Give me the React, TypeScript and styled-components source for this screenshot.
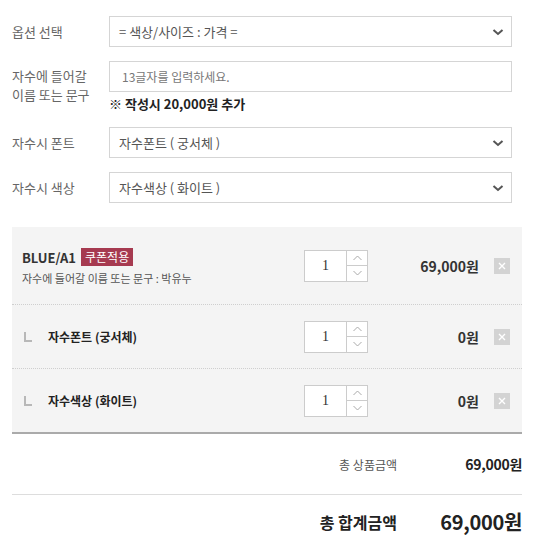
import React from 'react';
import styled, { createGlobalStyle } from 'styled-components';

const GlobalStyle = createGlobalStyle`
  body {
    margin: 0;
    background: #fff;
    font-family: 'Noto Sans CJK KR', 'Noto Sans', sans-serif;
    color: #333;
  }
`;

// Whole option/cart block
const Wrap = styled.div`
  width: 537px;
  box-sizing: border-box;
  padding: 16px 15px 0 12px;
`;

const OptionList = styled.div`
  display: flex;
  flex-direction: column;
  gap: 14px;
  padding-right: 10px;
`;

const OptionRow = styled.div<{ $top?: boolean }>`
  display: grid;
  grid-template-columns: 97px 1fr;
  align-items: ${(p) => (p.$top ? 'start' : 'center')};
`;

const Label = styled.div<{ $top?: boolean }>`
  font-size: 13px;
  line-height: 19px;
  color: #666;
  padding-top: ${(p) => (p.$top ? '5px' : '0')};
`;

const SelectBox = styled.div`
  display: flex;
  align-items: center;
  justify-content: space-between;
  height: 31px;
  box-sizing: border-box;
  border: 1px solid #d5d5d5;
  padding: 0 6px 0 9px;
  font-size: 13px;
  color: #555;
  background: #fff;
`;

const TextInput = styled.div`
  display: flex;
  align-items: center;
  height: 31px;
  box-sizing: border-box;
  border: 1px solid #d5d5d5;
  padding: 0 12px;
  font-size: 12px;
  color: #777;
`;

const Note = styled.div`
  margin-top: 2px;
  font-size: 13px;
  font-weight: 700;
  color: #222;
`;

// Selected items table
const Cart = styled.div`
  margin-top: 24px;
  background: #f4f4f4;
  border-bottom: 2px solid #aaa;
`;

const ItemRow = styled.div<{ $main?: boolean }>`
  display: flex;
  align-items: center;
  height: ${(p) => (p.$main ? '77px' : '63px')};
  padding: 0 12px 0 10px;
  border-bottom: 1px dotted #cfcfcf;
  &:last-child {
    border-bottom: none;
  }
`;

const ItemInfo = styled.div`
  flex: 1;
  min-width: 0;
  display: flex;
  align-items: center;
`;

const NameLine = styled.div`
  display: flex;
  align-items: center;
  gap: 5px;
  margin-top: 2px;
`;

const Name = styled.span`
  font-size: 13px;
  font-weight: 700;
  color: #333;
`;

const Badge = styled.span`
  background: #a63a50;
  color: #fff;
  font-size: 12px;
  line-height: 18px;
  padding: 0 4px;
`;

const SubText = styled.div`
  margin-top: 3px;
  font-size: 11px;
  color: #555;
`;

const SubMark = styled.span`
  width: 8px;
  height: 10px;
  border-left: 2px solid #b8b8b8;
  border-bottom: 2px solid #b8b8b8;
  box-sizing: border-box;
  margin: 0 16px 0 2px;
`;

const SubName = styled.span`
  font-size: 12px;
  font-weight: 700;
  color: #222;
`;

const Stepper = styled.div`
  display: flex;
  width: 64px;
  height: 32px;
  box-sizing: border-box;
  border: 1px solid #ccc;
  background: #fff;
`;

const QtyValue = styled.div`
  width: 41px;
  display: flex;
  align-items: center;
  justify-content: center;
  font-family: 'Liberation Serif', serif;
  font-size: 14px;
  color: #333;
  border-right: 1px solid #ccc;
`;

const StepButtons = styled.div`
  flex: 1;
  display: flex;
  flex-direction: column;
`;

const StepButton = styled.div`
  flex: 1;
  display: flex;
  align-items: center;
  justify-content: center;
  & + & {
    border-top: 1px solid #ccc;
  }
`;

const Price = styled.div`
  width: 111px;
  text-align: right;
  font-size: 14px;
  font-weight: 700;
  color: #333;
`;

const RemoveButton = styled.div`
  width: 16px;
  height: 16px;
  margin-left: 15px;
  background: #d3d3d3;
  display: flex;
  align-items: center;
  justify-content: center;
`;

// Totals
const SumRow = styled.div<{ $total?: boolean }>`
  display: flex;
  justify-content: flex-end;
  align-items: center;
  height: ${(p) => (p.$total ? '53px' : '60px')};
  border-bottom: ${(p) => (p.$total ? 'none' : '1px solid #ddd')};
`;

const SumLabel = styled.span<{ $total?: boolean }>`
  font-size: ${(p) => (p.$total ? '16px' : '12px')};
  font-weight: ${(p) => (p.$total ? 700 : 400)};
  color: ${(p) => (p.$total ? '#222' : '#555')};
`;

const SumValue = styled.span<{ $total?: boolean }>`
  width: 125px;
  text-align: right;
  font-size: ${(p) => (p.$total ? '20px' : '14px')};
  font-weight: 700;
  color: #222;
  letter-spacing: -0.3px;
`;

const Chevron = () => (
  <svg width="14" height="14" viewBox="0 0 14 14">
    <polyline points="2.5,5 7,9 11.5,5" fill="none" stroke="#555" strokeWidth="2" />
  </svg>
);

const Arrow = ({ up }: { up?: boolean }) => (
  <svg width="9" height="6" viewBox="0 0 9 6">
    <polyline
      points={up ? '0.5,5 4.5,1 8.5,5' : '0.5,1 4.5,5 8.5,1'}
      fill="none"
      stroke="#aaa"
      strokeWidth="1"
    />
  </svg>
);

const Cross = () => (
  <svg width="8" height="8" viewBox="0 0 8 8">
    <path d="M1 1 L7 7 M7 1 L1 7" stroke="#fff" strokeWidth="1.4" />
  </svg>
);

const QtyControl = () => (
  <Stepper>
    <QtyValue>1</QtyValue>
    <StepButtons>
      <StepButton>
        <Arrow up />
      </StepButton>
      <StepButton>
        <Arrow />
      </StepButton>
    </StepButtons>
  </Stepper>
);

const options = [
  { label: '자수시 폰트', value: '자수폰트 ( 궁서체 )' },
  { label: '자수시 색상', value: '자수색상 ( 화이트 )' },
];

const subItems = ['자수폰트 (궁서체)', '자수색상 (화이트)'];

export default function App() {
  return (
    <Wrap>
      <GlobalStyle />
      <OptionList>
        <OptionRow>
          <Label>옵션 선택</Label>
          <SelectBox>
            = 색상/사이즈 : 가격 =
            <Chevron />
          </SelectBox>
        </OptionRow>

        <OptionRow $top>
          <Label $top>
            자수에 들어갈
            <br />
            이름 또는 문구
          </Label>
          <div>
            <TextInput>13글자를 입력하세요.</TextInput>
            <Note>※ 작성시 20,000원 추가</Note>
          </div>
        </OptionRow>

        {options.map((o) => (
          <OptionRow key={o.label}>
            <Label>{o.label}</Label>
            <SelectBox>
              {o.value}
              <Chevron />
            </SelectBox>
          </OptionRow>
        ))}
      </OptionList>

      <Cart>
        <ItemRow $main>
          <ItemInfo>
            <div>
              <NameLine>
                <Name>BLUE/A1</Name>
                <Badge>쿠폰적용</Badge>
              </NameLine>
              <SubText>자수에 들어갈 이름 또는 문구 : 박유누</SubText>
            </div>
          </ItemInfo>
          <QtyControl />
          <Price>69,000원</Price>
          <RemoveButton>
            <Cross />
          </RemoveButton>
        </ItemRow>
        {subItems.map((s) => (
          <ItemRow key={s}>
            <ItemInfo>
              <SubMark />
              <SubName>{s}</SubName>
            </ItemInfo>
            <QtyControl />
            <Price>0원</Price>
            <RemoveButton>
              <Cross />
            </RemoveButton>
          </ItemRow>
        ))}
      </Cart>

      <SumRow>
        <SumLabel>총 상품금액</SumLabel>
        <SumValue>69,000원</SumValue>
      </SumRow>
      <SumRow $total>
        <SumLabel $total>총 합계금액</SumLabel>
        <SumValue $total>69,000원</SumValue>
      </SumRow>
    </Wrap>
  );
}
